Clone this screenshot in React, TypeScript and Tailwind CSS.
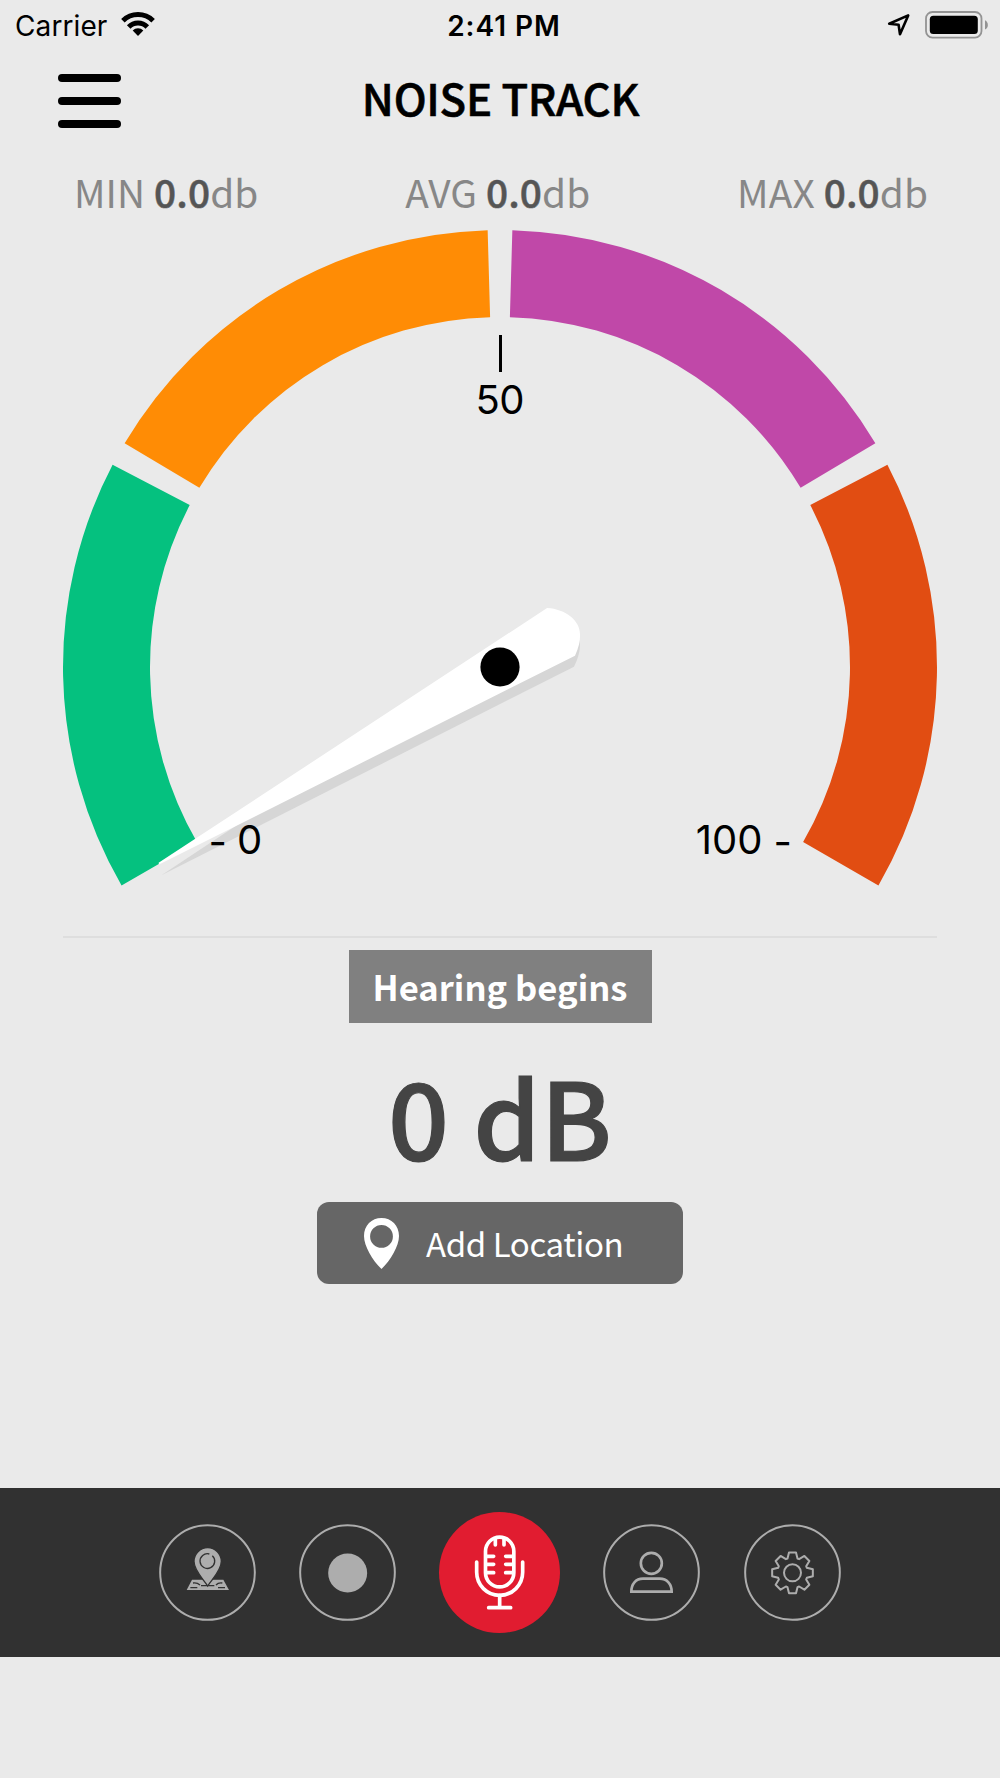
import type { ReactNode } from "react";

const CX = 437;
const CY = 437;
const OUTER = 437;
const INNER = 350;

// start/end in degrees, counter-clockwise from 3 o'clock
const segments = [
  { from: 210, to: 152.44, color: "#05c17f" },
  { from: 149.2, to: 91.62, color: "#ff8c05" },
  { from: 88.38, to: 30.8, color: "#c048a8" },
  { from: 27.56, to: -30, color: "#e14d12" },
];

const stats = [
  { label: "MIN", value: "0.0" },
  { label: "AVG", value: "0.0" },
  { label: "MAX", value: "0.0" },
];

function point(radius: number, deg: number) {
  const rad = (deg * Math.PI) / 180;
  return `${(CX + radius * Math.cos(rad)).toFixed(2)} ${(CY - radius * Math.sin(rad)).toFixed(2)}`;
}

function segmentPath(from: number, to: number) {
  return `M${point(OUTER, from)} A${OUTER} ${OUTER} 0 0 1 ${point(OUTER, to)} L${point(INNER, to)} A${INNER} ${INNER} 0 0 0 ${point(INNER, from)} Z`;
}

function gearPath() {
  const tooth = [
    [-15, -43],
    [-10.5, -61],
    [10.5, -61],
    [15, -43],
  ];
  const pts: string[] = [];
  for (let i = 0; i < 8; i++) {
    const a = (i * Math.PI) / 4;
    for (const [x, y] of tooth) {
      const px = 145.5 + x * Math.cos(a) - y * Math.sin(a);
      const py = 146.5 + x * Math.sin(a) + y * Math.cos(a);
      pts.push(`${px.toFixed(1)} ${py.toFixed(1)}`);
    }
  }
  return `M${pts.join(" L")} Z`;
}

function StatusBar() {
  return (
    <div className="grid h-12 grid-cols-3 items-center pt-[3px] pr-3 pl-[15px] font-['Inter',sans-serif] text-[28px] leading-none text-black">
      <div className="flex items-center">
        <span className="tracking-[0.1px]">Carrier</span>
        <svg className="mb-1 ml-[14px] h-6 w-[34px]" viewBox="0 0 34 24" fill="none" stroke="#000">
          <path d="M1.9 8.7 A21.5 21.5 0 0 1 32.1 8.7" strokeWidth="5" />
          <path d="M7.7 14.9 A13 13 0 0 1 26.3 14.9" strokeWidth="5" />
          <path d="M17 24 L11.7 18.6 A7.4 7.4 0 0 1 22.3 18.6 Z" fill="#000" stroke="none" />
        </svg>
      </div>
      <span className="pl-[5px] text-center font-semibold tracking-[0.95px]">2:41 PM</span>
      <div className="flex items-center justify-end pb-[2px]">
        <svg className="mr-[14px] h-6 w-6" viewBox="0 0 24 24" fill="none">
          <path
            d="M21.2 2.4 L2.2 10.8 L11.6 11.8 L13 21.2 Z"
            stroke="#000"
            strokeWidth="2.6"
            strokeLinejoin="round"
          />
        </svg>
        <svg className="h-7 w-[63px]" viewBox="0 0 63 28">
          <rect x="1" y="1" width="55.5" height="25.6" rx="6.5" fill="none" stroke="#939393" strokeWidth="1.8" />
          <rect x="4.8" y="4.7" width="48" height="18.3" rx="3.5" fill="#000" />
          <path d="M60 9.3 C63.8 11 63.8 16.8 60 18.6 Z" fill="#939393" />
        </svg>
      </div>
    </div>
  );
}

function Header() {
  return (
    <header className="grid h-[106px] grid-cols-[1fr_auto_1fr] items-center px-[58px]">
      <button className="flex w-[63px] flex-col gap-[14.7px]" aria-label="Menu">
        <span className="h-2 rounded-full bg-black" />
        <span className="h-2 rounded-full bg-black" />
        <span className="h-2 rounded-full bg-black" />
      </button>
      <h1 className="mb-[8px] ml-[1px] text-[43.7px] leading-[60px] font-medium tracking-[-0.25px] text-black [-webkit-text-stroke:0.6px_#000]">
        NOISE TRACK
      </h1>
    </header>
  );
}

function Stats() {
  return (
    <div className="flex h-[76px] justify-between pr-[72px] pl-[74px] pt-[7px] text-[38.8px] leading-[60px] font-normal tracking-[0.1px] text-[#878787]">
      {stats.map((stat) => (
        <div key={stat.label} className="whitespace-nowrap">
          {stat.label} <span className="font-medium text-[#555] [-webkit-text-stroke:0.5px_#555]">{stat.value}</span>db
        </div>
      ))}
    </div>
  );
}

function Gauge() {
  return (
    <svg className="mx-auto block h-[706px] w-[874px]" viewBox="0 0 874 706">
      {segments.map((s) => (
        <path key={s.color} d={segmentPath(s.from, s.to)} fill={s.color} />
      ))}

      {/* Needle with its flat shadow */}
      <path
        d="M98.4 645.3 L484 389 C506 391 517 404 517 416 Q516.5 426 511 436.7 Z"
        fill="#d6d6d6"
      />
      <path
        d="M95.6 632.8 L484.1 378 C503 379 517 391 517 404 Q517.5 414 512 425.7 L96 634.6 Z"
        fill="#fff"
      />
      <circle cx={CX} cy={CY} r="19.6" fill="#000" />

      <path d="M437.5 105 V142" stroke="#000" strokeWidth="3" />
      <g fontFamily="Inter, sans-serif" fontSize="40" fill="#000">
        <text x="437" y="184" textAnchor="middle" textLength="49" lengthAdjust="spacing">
          50
        </text>
        <text x="145.5" y="626">-</text>
        <text x="174" y="624">0</text>
        <text x="699.5" y="624" textAnchor="end">
          100
        </text>
        <text x="729" y="626" textAnchor="end">
          -
        </text>
      </g>
    </svg>
  );
}

function NavButton({ children }: { children: ReactNode }) {
  return (
    <button className="size-[97px]">
      <svg viewBox="0 0 291 291" className="size-full" fill="none" stroke="#adadad">
        <circle cx="145.5" cy="145.5" r="142" strokeWidth="6" />
        {children}
      </svg>
    </button>
  );
}

function TabBar() {
  return (
    <nav className="flex h-[169px] items-center justify-center gap-[43.25px] bg-[#313131] pr-[1px]">
      <NavButton>
        <path d="M99 167 H193 L210 198 H83 Z" fill="#adadad" stroke="none" />
        <path
          d="M146 186 C134 166 105 141 105 112 A41 41 0 0 1 187 112 C187 141 158 166 146 186 Z"
          fill="#adadad"
          stroke="#313131"
          strokeWidth="4"
        />
        <path d="M151 90 A22 22 0 1 0 160 95" stroke="#313131" strokeWidth="4" />
        <path
          d="M102 177 Q114 175 123 183 M94 191 H115 M126 185 H166 M190 177 Q178 175 171 183 M177 191 H198"
          stroke="#313131"
          strokeWidth="4"
        />
      </NavButton>

      <NavButton>
        <circle cx="146" cy="147" r="58.5" fill="#adadad" stroke="none" />
      </NavButton>

      <button className="size-[121px] rounded-full bg-[#e11c30]">
        <svg
          viewBox="0 0 363 363"
          className="size-full"
          fill="none"
          stroke="#fff"
          strokeWidth="11"
          strokeLinecap="round"
        >
          <rect x="139.5" y="75.5" width="85" height="149" rx="42.5" />
          <path d="M113 150 V181 A69 69 0 0 0 251 181 V150" />
          <path d="M182 250 V287 M149 287 H215" />
          <path d="M142 133 H164 M142 157 H164 M142 182 H164 M200 133 H222 M200 157 H222 M200 182 H222" />
          <path d="M169 80 V99 M195 80 V99" />
        </svg>
      </button>

      <NavButton>
        <circle cx="145" cy="118" r="31.5" strokeWidth="8" />
        <path d="M85 203 C85 180 98 164 120 164 H170 C192 164 206 180 206 203 Z" strokeWidth="8" />
      </NavButton>

      <NavButton>
        <path d={gearPath()} strokeWidth="6" strokeLinejoin="round" />
        <circle cx="145.5" cy="146.5" r="25.5" strokeWidth="6" />
      </NavButton>
    </nav>
  );
}

export default function App() {
  return (
    <div className="flex h-[1778px] w-[1000px] flex-col bg-[#eaeaea] font-['Noto_Sans_CJK_SC',sans-serif]">
      <StatusBar />
      <Header />
      <Stats />
      <Gauge />

      <main className="mx-[63px] flex h-[552px] flex-col items-center border-t-2 border-[#dedede] pt-3">
        <div className="flex h-[73px] w-[303px] items-center justify-center bg-[#808080] pb-[1px] text-[34.6px] leading-none font-bold text-white">
          Hearing begins
        </div>
        <div className="mt-[22px] h-[157px] text-[107px] leading-[140px] font-medium whitespace-pre text-[#444] [-webkit-text-stroke:1.2px_#444]">
          0 dB
        </div>
        <button className="flex h-[82px] w-[366px] items-center rounded-xl bg-[#666] pl-[47px] text-[33px] leading-none tracking-[-0.4px] text-white">
          <svg className="mr-[27px] h-[51px] w-[35px]" viewBox="0 0 35 51" fill="#fff">
            <path
              fillRule="evenodd"
              d="M17.5 0 C27.5 0 35 7.5 35 18 C35 28 26.5 42.5 17.5 51 C8.5 42.5 0 28 0 18 C0 7.5 7.5 0 17.5 0 Z M17.5 7 A11.4 11.4 0 1 0 17.5 29.8 A11.4 11.4 0 1 0 17.5 7 Z"
            />
          </svg>
          Add Location
        </button>
      </main>

      <TabBar />
    </div>
  );
}
